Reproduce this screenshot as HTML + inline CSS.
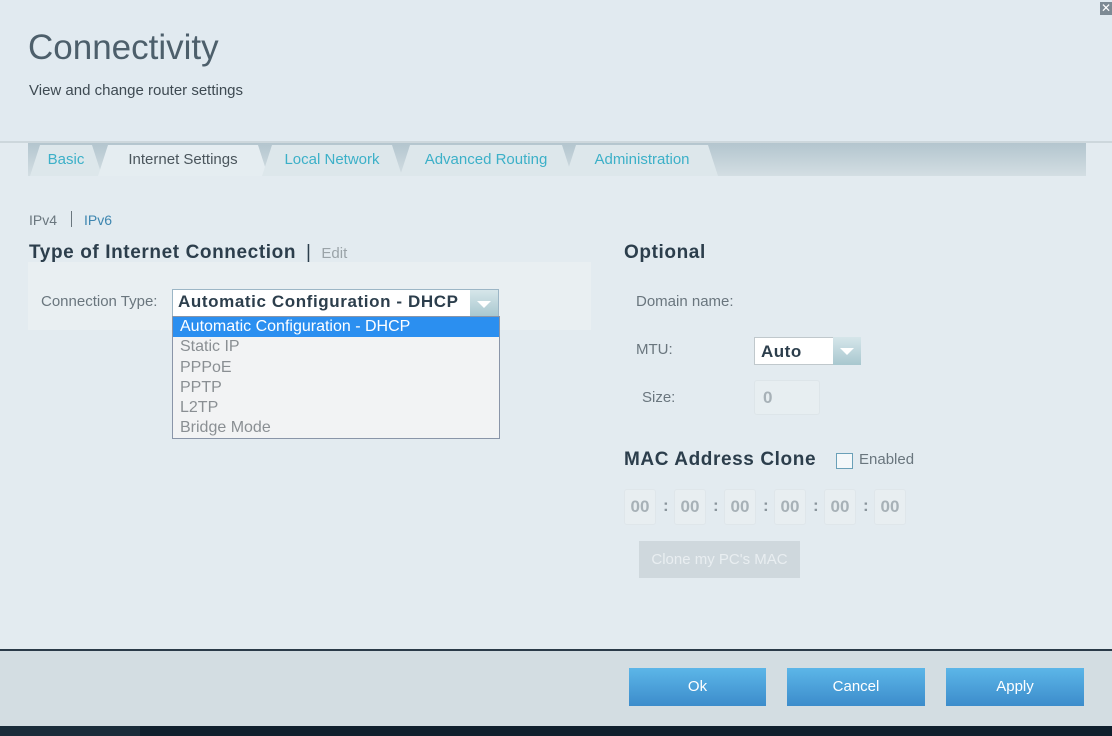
<!DOCTYPE html>
<html><head><meta charset="utf-8"><style>
*{margin:0;padding:0;box-sizing:border-box}
body{width:1112px;height:736px;overflow:hidden;font-family:"Liberation Sans",Arial,sans-serif;background:#e3ebf0;position:relative}
.a{position:absolute}
.tab{position:absolute;top:145px;height:31px;background:#dde7eb;clip-path:polygon(0 100%,10px 0,calc(100% - 10px) 0,100% 100%);font-size:15px;color:#3cb0c8;text-align:center;line-height:29px}
.lbl{position:absolute;font-size:15px;color:#6a767e}
.h{position:absolute;font-size:19px;font-weight:bold;color:#2c3e4c;letter-spacing:0.6px}
.mac{position:absolute;top:489px;width:32px;height:36px;background:#e8eef1;border:1px solid #dfe6ea;border-radius:3px;font-weight:bold;font-size:17px;color:#a7b1b7;text-align:center;line-height:34px}
.col{position:absolute;top:496px;font-weight:bold;font-size:17px;color:#8a959c}
.btn{position:absolute;top:668px;height:38px;background:linear-gradient(#5cb6e8,#3c8ccb);color:#fff;font-size:15px;text-align:center;line-height:38px}
.opt{font-size:16px;color:#8a8f93;padding-left:7px;height:20.3px;line-height:20px}
</style></head><body>
<div class="a" style="left:0;top:0;width:1112px;height:142px;background:#e1eaf0"></div>
<div class="a" style="left:1100px;top:2px;width:12px;height:13px;background:#7d8a94;color:#fff;font-size:12px;line-height:13px;text-align:center">✕</div>
<div class="a" style="left:28px;top:28px;font-size:35px;color:#4d5f6b">Connectivity</div>
<div class="a" style="left:29px;top:82px;font-size:15px;color:#3e4a52">View and change router settings</div>
<div class="a" style="left:0;top:141px;width:1112px;height:2px;background:#cdd7dc"></div>
<div class="a" style="left:28px;top:143px;width:1058px;height:33px;background:linear-gradient(#b3c5ce,#d3dee3)"></div>
<div class="tab" style="left:30px;width:72px">Basic</div>
<div class="tab" style="left:98px;width:170px;background:#e5edf1;color:#4a555c">Internet Settings</div>
<div class="tab" style="left:262px;width:140px">Local Network</div>
<div class="tab" style="left:400px;width:172px">Advanced Routing</div>
<div class="tab" style="left:566px;width:152px">Administration</div>
<div class="a" style="left:29px;top:212px;font-size:14px;color:#6a767e">IPv4</div>
<div class="a" style="left:71px;top:211px;width:1px;height:16px;background:#6a767e"></div>
<div class="a" style="left:84px;top:212px;font-size:14px;color:#3e86b0">IPv6</div>
<div class="h" style="left:29px;top:242px">Type of Internet Connection <span style="font-weight:normal;margin-left:4px">|</span> <span style="font-weight:normal;font-size:15px;color:#9aa3a8;margin-left:4px;letter-spacing:0">Edit</span></div>
<div class="a" style="left:28px;top:262px;width:563px;height:68px;background:#e9eff2"></div>
<div class="lbl" style="left:41px;top:293px">Connection Type:</div>
<div class="a" style="left:172px;top:289px;width:327px;height:29px;background:#fff;border:1px solid #9cb6c6"></div>
<div class="a" style="left:178px;top:292px;font-size:17px;font-weight:bold;color:#2c3e4c;letter-spacing:0.6px">Automatic Configuration - DHCP</div>
<div class="a" style="left:470px;top:290px;width:28px;height:27px;background:linear-gradient(#d6e6ea,#a8c7cf)"><svg width="28" height="27"><path d="M7 11h14l-7 7z" fill="#fff"/></svg></div>
<div class="a" style="left:172px;top:316px;width:328px;height:123px;background:#f2f3f4;border:1px solid #8a95a8">
<div class="opt" style="background:#2b8ff0;color:#fff">Automatic Configuration - DHCP</div>
<div class="opt">Static IP</div><div class="opt">PPPoE</div><div class="opt">PPTP</div><div class="opt">L2TP</div><div class="opt">Bridge Mode</div>
</div>
<div class="h" style="left:624px;top:242px">Optional</div>
<div class="lbl" style="left:636px;top:293px">Domain name:</div>
<div class="lbl" style="left:636px;top:341px">MTU:</div>
<div class="a" style="left:754px;top:337px;width:80px;height:28px;background:#fff;border:1px solid #c0c8cc;font-weight:bold;font-size:17px;color:#2c3e4c;padding:4px 0 0 6px;letter-spacing:0.5px">Auto</div>
<div class="a" style="left:833px;top:337px;width:28px;height:28px;background:linear-gradient(#d6e6ea,#a8c7cf)"><svg width="28" height="28"><path d="M7 11h14l-7 7z" fill="#fff"/></svg></div>
<div class="lbl" style="left:642px;top:389px">Size:</div>
<div class="a" style="left:754px;top:380px;width:66px;height:35px;background:#e7eef1;border:1px solid #dde5e9;border-radius:3px;font-weight:bold;font-size:17px;color:#a7b1b7;padding:7px 0 0 8px">0</div>
<div class="h" style="left:624px;top:449px">MAC Address Clone</div>
<div class="a" style="left:836px;top:453px;width:17px;height:16px;border:1px solid #6aa0b8;background:#f4f8fa"></div>
<div class="a" style="left:859px;top:451px;font-size:15px;color:#6a767e">Enabled</div>
<div class="mac" style="left:624px">00</div><div class="col" style="left:663px">:</div>
<div class="mac" style="left:674px">00</div><div class="col" style="left:713px">:</div>
<div class="mac" style="left:724px">00</div><div class="col" style="left:763px">:</div>
<div class="mac" style="left:774px">00</div><div class="col" style="left:813px">:</div>
<div class="mac" style="left:824px">00</div><div class="col" style="left:863px">:</div>
<div class="mac" style="left:874px">00</div>
<div class="a" style="left:639px;top:541px;width:161px;height:37px;background:#cfd8dd;color:#e9eef1;font-size:15px;text-align:center;line-height:37px">Clone my PC's MAC</div>
<div class="a" style="left:0;top:649px;width:1112px;height:77px;background:#d3dde2;border-top:2px solid #2a3a48"></div>
<div class="btn" style="left:629px;width:137px">Ok</div>
<div class="btn" style="left:787px;width:138px">Cancel</div>
<div class="btn" style="left:946px;width:138px">Apply</div>
<div class="a" style="left:0;top:726px;width:1112px;height:10px;background:#0f1f2d"></div>
<div class="a" style="left:0;top:726px;width:140px;height:10px;background:#1a2c3a"></div>
</body></html>
